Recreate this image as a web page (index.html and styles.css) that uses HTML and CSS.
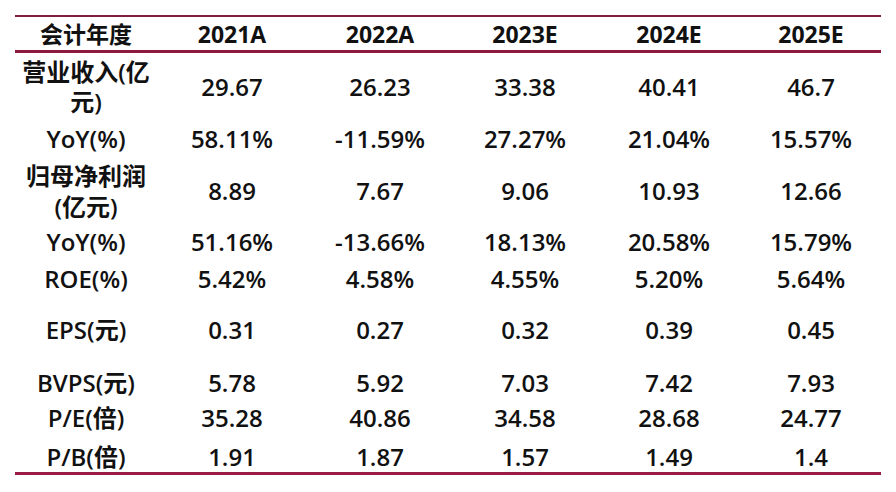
FILE: index.html
```html
<!DOCTYPE html>
<html lang="zh-CN">
<head>
<meta charset="utf-8">
<title>盈利预测</title>
<link rel="stylesheet" href="styles.css">
</head>
<body>
<div class="table">
  <div class="row head"><div>会计年度</div><div>2021A</div><div>2022A</div><div>2023E</div><div>2024E</div><div>2025E</div></div>
  <div class="row r1"><div class="label wrap1">营业收入(亿<br>元)</div><div>29.67</div><div>26.23</div><div>33.38</div><div>40.41</div><div>46.7</div></div>
  <div class="row r2"><div class="label">YoY(%)</div><div>58.11%</div><div>-11.59%</div><div>27.27%</div><div>21.04%</div><div>15.57%</div></div>
  <div class="row r3"><div class="label wrap2">归母净利润<br>(亿元)</div><div>8.89</div><div>7.67</div><div>9.06</div><div>10.93</div><div>12.66</div></div>
  <div class="row r4"><div class="label">YoY(%)</div><div>51.16%</div><div>-13.66%</div><div>18.13%</div><div>20.58%</div><div>15.79%</div></div>
  <div class="row r5"><div class="label">ROE(%)</div><div>5.42%</div><div>4.58%</div><div>4.55%</div><div>5.20%</div><div>5.64%</div></div>
  <div class="row r6"><div class="label">EPS(元)</div><div>0.31</div><div>0.27</div><div>0.32</div><div>0.39</div><div>0.45</div></div>
  <div class="row r7"><div class="label">BVPS(元)</div><div>5.78</div><div>5.92</div><div>7.03</div><div>7.42</div><div>7.93</div></div>
  <div class="row r8"><div class="label">P/E(倍)</div><div>35.28</div><div>40.86</div><div>34.58</div><div>28.68</div><div>24.77</div></div>
  <div class="row r9 last"><div class="label">P/B(倍)</div><div>1.91</div><div>1.87</div><div>1.57</div><div>1.49</div><div>1.4</div></div>
</div>
</body>
</html>
```

FILE: styles.css
```css
html, body {
  margin: 0;
  padding: 0;
  background: #ffffff;
}

body {
  font-family: "Open Sans", "Noto Sans", "Noto Sans CJK SC", sans-serif;
  color: #111111;
  font-size: 24px;
  font-weight: 550;
}

.table {
  margin: 15px 0 0 15px;
  width: 866px;
  border-top: 2px solid #7f1f3f;
}

.row {
  display: grid;
  grid-template-columns: 142px 150px 146px 144px 144px 140px;
  align-items: center;
  text-align: center;
  line-height: 28px;
}

.head {
  height: 33px;
  border-bottom: 3px solid #8e1a3f;
  font-weight: 700;
  font-size: 23px;
}

.label {
  white-space: nowrap;
  font-weight: 600;
}

.wrap1 {
  line-height: 30px;
}

.wrap2 {
  line-height: 31px;
}

.r1 { height: 68px; }
.r2 { height: 36px; }
.r3 { height: 67px; }
.r4 { height: 36px; }
.r5 { height: 38px; }
.r6 { height: 64px; }
.r7 { height: 42px; }
.r8 { height: 28px; }
.r9 { height: 30px; padding-top: 10px; }

.last {
  border-bottom: 3px solid #9a1b45;
}
```
